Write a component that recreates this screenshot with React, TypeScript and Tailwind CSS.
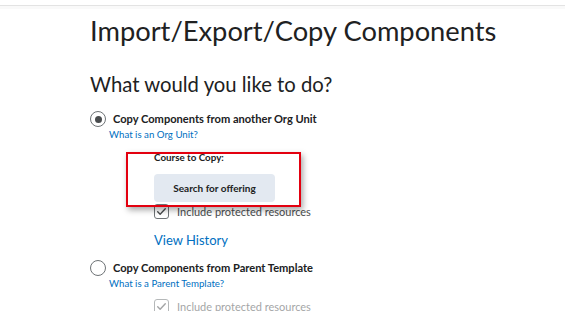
function Radio({ checked }: { checked?: boolean }) {
  return (
    <span className="flex h-[16px] w-[16px] shrink-0 items-center justify-center rounded-full border-[1.5px] border-[#6e7376] bg-white">
      {checked && <span className="h-[7px] w-[7px] rounded-full bg-[#494c4e]" />}
    </span>
  );
}

function Checkbox({ disabled }: { disabled?: boolean }) {
  return (
    <span
      className={`flex h-[15px] w-[15px] shrink-0 items-center justify-center rounded-[3px] border border-[#6e7376] bg-white ${
        disabled ? "opacity-50" : ""
      }`}
    >
      <svg viewBox="0 0 16 16" className="h-[11px] w-[11px]" fill="none">
        <path
          d="M2.5 8.5l3.5 3.5 7.5-8"
          stroke="#494c4e"
          strokeWidth="2"
          strokeLinecap="round"
          strokeLinejoin="round"
        />
      </svg>
    </span>
  );
}

export default function App() {
  return (
    <div className="h-[311px] overflow-hidden bg-white font-['Lato',sans-serif] text-[#202122]">
      <div className="h-[5px]" />
      <div className="h-[1px] bg-[#e3e3e3]" />
      <div className="h-[3px] bg-[#f9f9f9]" />

      <div className="pl-[90px]">
        <h1 className="mt-[6px] text-[27.3px] leading-[32px] font-normal">
          Import/Export/Copy Components
        </h1>
        <h2 className="mt-[25px] text-[20.3px] leading-[24px] font-normal">
          What would you like to do?
        </h2>

        <div className="mt-[15px] flex items-center gap-[7px]">
          <Radio checked />
          <span className="text-[11.1px] leading-[16px] font-bold">
            Copy Components from another Org Unit
          </span>
        </div>
        <a className="ml-[19px] block text-[9.7px] leading-[14px] text-[#006fbf]">
          What is an Org Unit?
        </a>

        <div className="relative ml-[64px] mt-[9px]">
          <div className="text-[9.8px] leading-[14px] font-bold">Course to Copy:</div>
          <button className="mt-[10px] h-[28px] w-[121px] rounded-[4px] bg-[#e3e9f1] text-[10px] font-bold text-[#202122]">
            Search for offering
          </button>
          <div className="mt-[2px] flex items-center gap-[8px]">
            <Checkbox />
            <span className="text-[11px] leading-[15px] text-[#494c4e]">
              Include protected resources
            </span>
          </div>
          <a className="mt-[12px] block text-[13px] leading-[18px] text-[#006fbf]">
            View History
          </a>

          <div className="pointer-events-none absolute left-[-28px] top-[2px] h-[55px] w-[175px] border-2 border-[#e3000f] shadow-[2px_3px_6px_rgba(0,0,0,0.35)]" />
        </div>

        <div className="mt-[11px] flex items-center gap-[7px]">
          <Radio />
          <span className="text-[11.1px] leading-[16px] font-bold">
            Copy Components from Parent Template
          </span>
        </div>
        <a className="ml-[19px] block text-[9.7px] leading-[14px] text-[#006fbf]">
          What is a Parent Template?
        </a>
        <div className="ml-[64px] mt-[9px] flex items-center gap-[8px]">
          <Checkbox disabled />
          <span className="text-[11px] leading-[15px] text-[#494c4e] opacity-50">
            Include protected resources
          </span>
        </div>
      </div>
    </div>
  );
}
